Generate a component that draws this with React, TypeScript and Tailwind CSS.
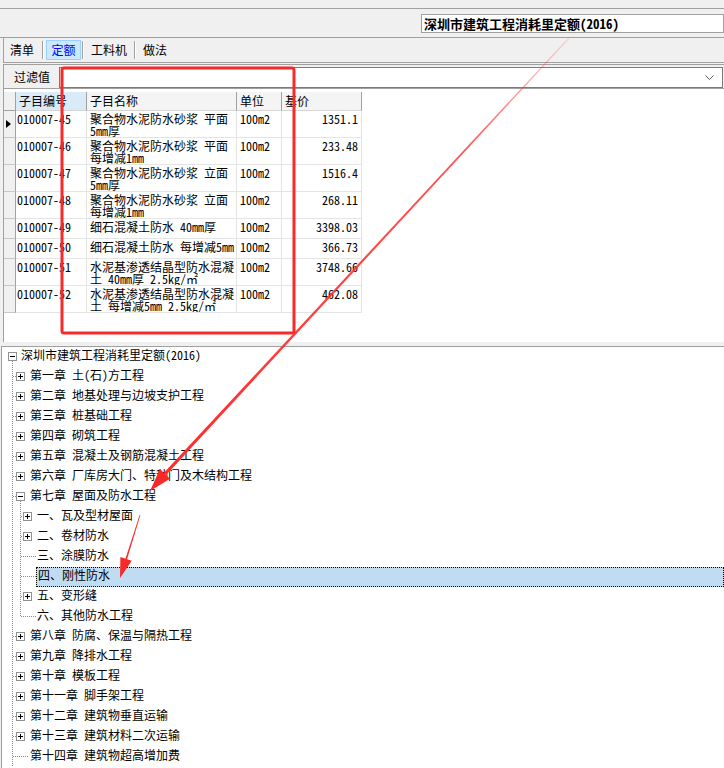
import React from 'react';

interface Row {
  code: string;
  name: string;
  unit: string;
  price: string;
  tall: boolean;
}

interface Node {
  level: number;
  text: string;
  box?: 'plus' | 'minus';
  last?: boolean;
  selected?: boolean;
}

const rows: Row[] = [
  { code: '010007-45', name: '聚合物水泥防水砂浆 平面 5mm厚', unit: '100m2', price: '1351.1', tall: true },
  { code: '010007-46', name: '聚合物水泥防水砂浆 平面 每增减1mm', unit: '100m2', price: '233.48', tall: true },
  { code: '010007-47', name: '聚合物水泥防水砂浆 立面 5mm厚', unit: '100m2', price: '1516.4', tall: true },
  { code: '010007-48', name: '聚合物水泥防水砂浆 立面 每增减1mm', unit: '100m2', price: '268.11', tall: true },
  { code: '010007-49', name: '细石混凝土防水 40mm厚', unit: '100m2', price: '3398.03', tall: false },
  { code: '010007-50', name: '细石混凝土防水 每增减5mm', unit: '100m2', price: '366.73', tall: false },
  { code: '010007-51', name: '水泥基渗透结晶型防水混凝土 40mm厚 2.5kg/㎡', unit: '100m2', price: '3748.66', tall: true },
  { code: '010007-52', name: '水泥基渗透结晶型防水混凝土 每增减5mm 2.5kg/㎡', unit: '100m2', price: '462.08', tall: true },
];

const tree: Node[] = [
  { level: 0, text: '深圳市建筑工程消耗里定额(2016)', box: 'minus' },
  { level: 1, text: '第一章 土(石)方工程', box: 'plus' },
  { level: 1, text: '第二章 地基处理与边坡支护工程', box: 'plus' },
  { level: 1, text: '第三章 桩基础工程', box: 'plus' },
  { level: 1, text: '第四章 砌筑工程', box: 'plus' },
  { level: 1, text: '第五章 混凝土及钢筋混凝土工程', box: 'plus' },
  { level: 1, text: '第六章 厂库房大门、特种门及木结构工程', box: 'plus' },
  { level: 1, text: '第七章 屋面及防水工程', box: 'minus' },
  { level: 2, text: '一、瓦及型材屋面', box: 'plus' },
  { level: 2, text: '二、卷材防水', box: 'plus' },
  { level: 2, text: '三、涂膜防水' },
  { level: 2, text: '四、刚性防水', selected: true },
  { level: 2, text: '五、变形缝', box: 'plus' },
  { level: 2, text: '六、其他防水工程', last: true },
  { level: 1, text: '第八章 防腐、保温与隔热工程', box: 'plus' },
  { level: 1, text: '第九章 降排水工程', box: 'plus' },
  { level: 1, text: '第十章 模板工程', box: 'plus' },
  { level: 1, text: '第十一章 脚手架工程', box: 'plus' },
  { level: 1, text: '第十二章 建筑物垂直运输', box: 'plus' },
  { level: 1, text: '第十三章 建筑材料二次运输', box: 'plus' },
  { level: 1, text: '第十四章 建筑物超高增加费' },
];

function Dots({ x1, y1, x2, y2 }: { x1: number; y1: number; x2: number; y2: number }) {
  return <line x1={x1} y1={y1} x2={x2} y2={y2} stroke="#8a8a8a" strokeDasharray="1 1" />;
}

function Box({ left, minus }: { left: number; minus?: boolean }) {
  return (
    <g>
      <rect x={left + 0.5} y={5.5} width={8} height={8} fill="#fff" stroke="#919191" />
      <line x1={left + 2} y1={9.5} x2={left + 7} y2={9.5} stroke="#000" />
      {!minus && <line x1={left + 4.5} y1={7} x2={left + 4.5} y2={12} stroke="#000" />}
    </g>
  );
}

// tree lines + expand boxes, in page x coords (panel content starts at x=2)
function Gutter({ node }: { node: Node }) {
  let w = 19;
  if (node.level === 1) w = 28;
  if (node.level === 2) w = node.selected ? 34 : 35;
  return (
    <svg width={w} height={20} viewBox={`2 0 ${w} 20`} className="shrink-0">
      {node.level === 0 && (
        <>
          <Dots x1={12.5} y1={14} x2={12.5} y2={20} />
          <Box left={8} minus />
        </>
      )}
      {node.level === 1 && (
        <>
          <Dots x1={12.5} y1={0} x2={12.5} y2={20} />
          {node.box ? (
            <>
              <Dots x1={13} y1={9.5} x2={16} y2={9.5} />
              {node.box === 'minus' && <Dots x1={20.5} y1={14} x2={20.5} y2={20} />}
              <Box left={16} minus={node.box === 'minus'} />
            </>
          ) : (
            <Dots x1={13} y1={9.5} x2={29} y2={9.5} />
          )}
        </>
      )}
      {node.level === 2 && (
        <>
          <Dots x1={12.5} y1={0} x2={12.5} y2={20} />
          <Dots x1={20.5} y1={0} x2={20.5} y2={node.last ? 10 : 20} />
          {node.box ? (
            <>
              <Dots x1={21} y1={9.5} x2={23} y2={9.5} />
              <Box left={23} />
            </>
          ) : (
            <Dots x1={21} y1={9.5} x2={36} y2={9.5} />
          )}
        </>
      )}
    </svg>
  );
}

function Arrows() {
  return (
    <svg width={724} height={768} className="absolute left-0 top-0 pointer-events-none">
      <defs>
        <linearGradient id="fade" x1="569" y1="38" x2="160" y2="480" gradientUnits="userSpaceOnUse">
          <stop offset="0" stopColor="#ff2a2a" stopOpacity="0.15" />
          <stop offset="0.25" stopColor="#ff2a2a" stopOpacity="0.8" />
          <stop offset="1" stopColor="#ff2a2a" stopOpacity="1" />
        </linearGradient>
      </defs>
      <rect x={62} y={68} width={232} height={265} rx={2} fill="none" stroke="#f72a2a" strokeWidth={3} />
      {/* long arrow */}
      <polygon points="569.4,38.4 568.6,37.6 163.9,472.8 166.1,475.0" fill="url(#fade)" />
      <polygon points="150,491 159.9,469.1 170.1,478.7" fill="#f72a2a" />
      {/* short arrow */}
      <polygon points="140.4,515 139.6,515 125.4,559 127,559.5" fill="#f72a2a" />
      <polygon points="120,578 120.4,557.1 131.8,560.7" fill="#f72a2a" />
    </svg>
  );
}

export default function App() {
  return (
    <div className="relative w-[724px] h-[768px] overflow-hidden bg-[#f0f0f0] text-[12px] text-black font-['Noto_Sans_Mono_CJK_SC','Noto_Sans_CJK_SC',sans-serif]">
      {/* top strip */}
      <div className="h-[9px] border-b border-[#a0a0a0]" />
      <div className="h-[29px] border-b border-[#a0a0a0] pl-[421px] pt-[5px]">
        <div className="h-[19px] border border-[#a0a0a0] bg-white pl-[2px] flex items-center text-[13px] font-bold leading-none whitespace-nowrap">
          深圳市建筑工程消耗里定额(2016)
        </div>
      </div>

      {/* tabs */}
      <div className="ml-[3px] h-[25px] border-l border-b border-[#a0a0a0] flex items-center">
        <span className="ml-[6px]">清单</span>
        <span className="ml-[8px] w-[2px] h-[18px] border-l border-r border-l-[#a0a0a0] border-r-white" />
        <span className="ml-[2px] w-[35px] h-[20px] flex items-center justify-center bg-[#cce8ff] border border-[#99d1ff] text-[#0000ff]">
          定额
        </span>
        <span className="ml-[1px] w-[2px] h-[18px] border-l border-r border-l-[#a0a0a0] border-r-white" />
        <span className="ml-[7px]">工料机</span>
        <span className="ml-[7px] w-[2px] h-[18px] border-l border-r border-l-[#a0a0a0] border-r-white" />
        <span className="ml-[7px]">做法</span>
      </div>

      {/* filter */}
      <div className="mt-[1px] ml-[3px] h-[24px] border-l border-t border-[#a0a0a0] flex items-start pt-[2px]">
        <span className="ml-[10px] mt-[3px] leading-[14px]">过滤值</span>
        <div className="ml-[9px] w-[664px] h-[21px] border border-[#7a7a7a] bg-white flex items-center justify-end pr-[8px]">
          <svg width="9" height="5" viewBox="0 0 9 5">
            <polyline points="0.5,0.5 4.5,4.5 8.5,0.5" fill="none" stroke="#606060" />
          </svg>
        </div>
      </div>

      {/* table */}
      <div className="ml-[3px] h-[254px] border-l border-t border-[#a0a0a0] bg-white pt-[3px]">
        <div className="grid grid-cols-[12px_71px_150px_45px_80px]">
          <div className="h-[19px] bg-[#f0f0f0] border-r border-b border-[#a0a0a0]" />
          <div className="h-[19px] bg-[#d9ebf9] border-r border-b border-r-[#a0a0a0] border-b-[#d5d5d5] pl-[3px] leading-[18px]">子目编号</div>
          <div className="h-[19px] bg-[#f4f4f4] border-r border-b border-r-[#a0a0a0] border-b-[#d5d5d5] pl-[3px] leading-[18px]">子目名称</div>
          <div className="h-[19px] bg-[#f4f4f4] border-r border-b border-r-[#a0a0a0] border-b-[#d5d5d5] pl-[3px] leading-[18px]">单位</div>
          <div className="h-[19px] bg-[#f4f4f4] border-r border-b border-r-[#a0a0a0] border-b-[#d5d5d5] pl-[3px] leading-[18px]">基价</div>
          {rows.map((r, i) => {
            const h = r.tall ? 'h-[27px]' : 'h-[20px]';
            return (
              <React.Fragment key={r.code}>
                <div className={`${h} bg-[#f0f0f0] border-r border-b border-r-[#a0a0a0] border-b-[#c8c8c8] flex items-start pt-[9px] pl-[2px]`}>
                  {i === 0 && (
                    <svg width="5" height="8" viewBox="0 0 5 8">
                      <polygon points="0,0 5,4 0,8" fill="#000" />
                    </svg>
                  )}
                </div>
                <div className={`${h} border-r border-b border-[#e4e4e4] pl-[1px] pt-[2px] leading-[12px]`}>{r.code}</div>
                <div className={`${h} border-r border-b border-[#e4e4e4] pl-[3px] pt-[2px] leading-[12px] overflow-hidden`}>{r.name}</div>
                <div className={`${h} border-r border-b border-[#e4e4e4] pl-[3px] pt-[2px] leading-[12px]`}>{r.unit}</div>
                <div className={`${h} border-r border-b border-[#e4e4e4] pr-[3px] pt-[2px] leading-[12px] text-right`}>{r.price}</div>
              </React.Fragment>
            );
          })}
        </div>
      </div>

      {/* splitter */}
      <div className="h-[4px]" />

      {/* tree */}
      <div className="ml-[1px] h-[422px] border-l border-t border-[#a0a0a0] bg-white">
        {tree.map((n) => (
          <div key={n.text} className="h-[20px] flex items-start whitespace-nowrap">
            <Gutter node={n} />
            {n.selected ? (
              <span className="flex-1 h-[20px] bg-[#c0dcf3] border border-dotted border-black pl-[1px] leading-[14px]">{n.text}</span>
            ) : (
              <span className="leading-[15px]">{n.text}</span>
            )}
          </div>
        ))}
      </div>

      <Arrows />
    </div>
  );
}
